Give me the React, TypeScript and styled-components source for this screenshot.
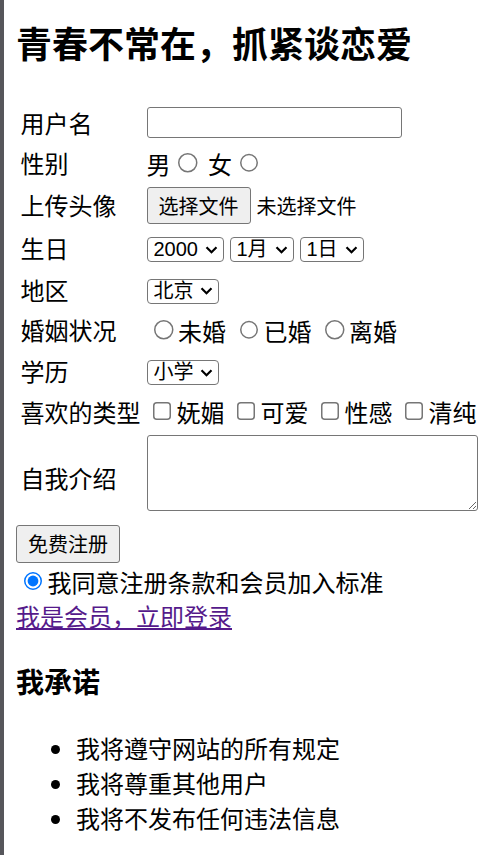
import React from "react";
import styled, { createGlobalStyle } from "styled-components";

const GlobalStyle = createGlobalStyle`
  html {
    min-height: 100vh;
    box-sizing: border-box;
    border-left: 4px solid #56565b;
    background: #fff;
  }
  body {
    margin: 0 12px 12px;
    font-family: "Noto Sans CJK SC", "Liberation Sans", sans-serif;
    font-size: 24px;
    color: #000;
  }
`;

const controlFont = `"Liberation Sans", "Noto Sans CJK SC", sans-serif`;

const Title = styled.h1`
  font-size: 36px;
  font-weight: 700;
  line-height: 36px;
  margin: 0;
  padding: 24px 0 42.5px;
`;

const Form = styled.form`
  padding-left: 4.5px;
`;

const Row = styled.div<{ $h: number }>`
  display: grid;
  grid-template-columns: 120px auto;
  column-gap: 6px;
  align-items: center;
  height: ${({ $h }) => $h}px;
`;

const Label = styled.label`
  line-height: 34px;
  white-space: nowrap;
`;

const Field = styled.div`
  display: flex;
  align-items: center;
  gap: 6px;
  white-space: nowrap;
`;

const Option = styled.label`
  display: inline-flex;
  align-items: center;
`;

const TextInput = styled.input`
  box-sizing: border-box;
  width: 255px;
  height: 31px;
  padding: 1px 3px;
  border: 1px solid #767676;
  border-radius: 3px;
  font-size: 20px;
  font-family: ${controlFont};
`;

const Button = styled.button<{ $h?: number }>`
  box-sizing: border-box;
  height: ${({ $h }) => $h ?? 37}px;
  padding: 0 11px;
  background: #efefef;
  border: 1px solid #767676;
  border-radius: 3px;
  color: #000;
  font-size: 20px;
  font-family: ${controlFont};
`;

const FileHint = styled.span`
  font-size: 20px;
  font-family: ${controlFont};
`;

const HiddenFile = styled.input`
  display: none;
`;

/* native radio / checkbox drawn at the page's 150% scale */
const Radio = styled.input.attrs({ type: "radio" })`
  zoom: 1.5;
  width: 13px;
  height: 13px;
  margin: 0 3px 0 5px;
  accent-color: #0075ff;
`;

const Checkbox = styled.input.attrs({ type: "checkbox" })`
  zoom: 1.5;
  width: 13px;
  height: 13px;
  margin: 0 3px 0 4px;
`;

const SelectWrap = styled.span`
  position: relative;
  display: inline-flex;
  margin-top: 3px;
`;

const Select = styled.select`
  appearance: none;
  box-sizing: border-box;
  height: 25px;
  padding: 0 24px 0 6px;
  border: 1px solid #767676;
  border-radius: 4px;
  background: #fff;
  color: #000;
  font-size: 20px;
  line-height: 23px;
  font-family: ${controlFont};
`;

const Chevron = styled.svg`
  position: absolute;
  right: 6px;
  top: 50%;
  transform: translateY(-50%);
  pointer-events: none;
`;

const Intro = styled.textarea`
  align-self: start;
  box-sizing: border-box;
  width: 331px;
  height: 76px;
  margin: 3.5px 0 0;
  border: 1px solid #767676;
  border-radius: 3px;
  font-size: 20px;
  font-family: ${controlFont};
`;

const Footer = styled.div`
  display: flex;
  flex-direction: column;
  align-items: flex-start;
`;

const AgreeLine = styled.label`
  display: flex;
  align-items: center;
  height: 36px;
  margin-top: 1px;
`;

const MemberLink = styled.a`
  line-height: 32px;
  color: #551a8b;
  text-decoration: underline;
`;

const SubTitle = styled.h3`
  font-size: 28px;
  font-weight: 700;
  line-height: 40px;
  margin: 29px 0;
`;

const PledgeList = styled.ul`
  margin: 0;
  padding-left: 60px;
  li {
    line-height: 35px;
  }
`;

const Dropdown = ({ options }: { options: string[] }) => (
  <SelectWrap>
    <Select defaultValue={options[0]}>
      {options.map((o) => (
        <option key={o}>{o}</option>
      ))}
    </Select>
    <Chevron width="13" height="9" viewBox="0 0 13 9">
      <path d="M1.5 1.8 L6.5 6.8 L11.5 1.8" fill="none" stroke="#000" strokeWidth="2.2" />
    </Chevron>
  </SelectWrap>
);

const App = () => {
  return (
    <section>
      <GlobalStyle />
      <Title>青春不常在，抓紧谈恋爱</Title>
      <Form onSubmit={(e) => e.preventDefault()}>
        <Row $h={40}>
          <Label>用户名</Label>
          <Field>
            <TextInput type="text" />
          </Field>
        </Row>
        <Row $h={41}>
          <Label>性别</Label>
          <Field>
            <Option>
              男<Radio name="sex" />
            </Option>
            <Option>
              女<Radio name="sex" />
            </Option>
          </Field>
        </Row>
        <Row $h={43}>
          <Label>上传头像</Label>
          <Field>
            <Button type="button">选择文件</Button>
            <FileHint>未选择文件</FileHint>
            <HiddenFile type="file" />
          </Field>
        </Row>
        <Row $h={43}>
          <Label>生日</Label>
          <Field>
            <Dropdown options={["2000", "2001", "2002"]} />
            <Dropdown options={["1月", "2月", "3月"]} />
            <Dropdown options={["1日", "2日", "3日"]} />
          </Field>
        </Row>
        <Row $h={40}>
          <Label>地区</Label>
          <Field>
            <Dropdown options={["北京", "上海", "广州"]} />
          </Field>
        </Row>
        <Row $h={41}>
          <Label>婚姻状况</Label>
          <Field>
            <Option>
              <Radio name="marry" />未婚
            </Option>
            <Option>
              <Radio name="marry" />已婚
            </Option>
            <Option>
              <Radio name="marry" />离婚
            </Option>
          </Field>
        </Row>
        <Row $h={41}>
          <Label>学历</Label>
          <Field>
            <Dropdown options={["小学", "初中", "高中"]} />
          </Field>
        </Row>
        <Row $h={40}>
          <Label>喜欢的类型</Label>
          <Field>
            <Option>
              <Checkbox />妩媚
            </Option>
            <Option>
              <Checkbox />可爱
            </Option>
            <Option>
              <Checkbox />性感
            </Option>
            <Option>
              <Checkbox />清纯
            </Option>
          </Field>
        </Row>
        <Row $h={93}>
          <Label>自我介绍</Label>
          <Intro />
        </Row>
      </Form>
      <Footer>
        <Button type="submit" $h={38}>
          免费注册
        </Button>
        <AgreeLine>
          <Radio defaultChecked />我同意注册条款和会员加入标准
        </AgreeLine>
        <MemberLink href="#">我是会员，立即登录</MemberLink>
      </Footer>
      <SubTitle>我承诺</SubTitle>
      <PledgeList>
        <li>我将遵守网站的所有规定</li>
        <li>我将尊重其他用户</li>
        <li>我将不发布任何违法信息</li>
      </PledgeList>
    </section>
  );
};

export default App;
